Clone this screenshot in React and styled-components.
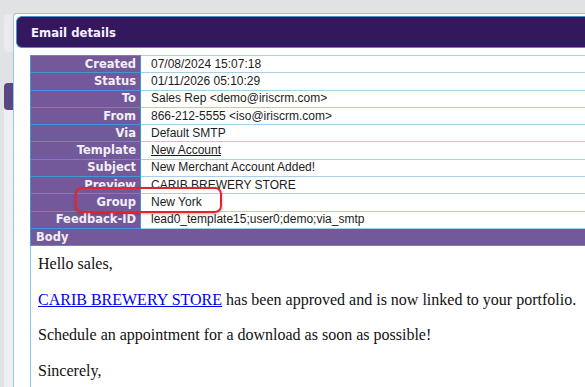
import styled, { createGlobalStyle } from "styled-components";

const GlobalStyle = createGlobalStyle`
  html, body {
    margin: 0;
    padding: 0;
    background: #e1e2e4;
    overflow: hidden;
  }
`;

const Page = styled.div`
  position: relative;
  width: 585px;
  height: 387px;
  display: flex;
  overflow: hidden;
`;

const BackWindow = styled.div`
  width: 9px;
  margin-left: 4px;
  display: flex;
  flex-direction: column;
`;

const BackPanel = styled.div`
  height: ${(p) => p.h}px;
  margin-top: ${(p) => p.top || 0}px;
  background: ${(p) => p.bg};
  border-radius: ${(p) => (p.round ? "4px 0 0 4px" : "0")};
  flex: ${(p) => (p.fill ? 1 : "none")};
`;

const Modal = styled.div`
  flex: 1;
  margin-top: 13px;
  background: #ffffff;
  border: 1px solid #8ccbee;
  border-right: none;
  border-bottom: none;
  border-top-left-radius: 3px;
  padding: 2px 0 0 2px;
  display: flex;
  flex-direction: column;
`;

const Header = styled.div`
  flex: none;
  height: 30px;
  background: #33185e;
  border: 1px solid #4d8fcf;
  border-right: none;
  border-radius: 6px 0 0 6px;
  display: flex;
  align-items: center;
  padding-left: 14px;
  color: #f4f0ff;
  font-family: "DejaVu Sans Condensed", "DejaVu Sans", sans-serif;
  font-weight: bold;
  font-size: 13px;
`;

const Content = styled.div`
  flex: none;
  padding: 7px 0 0 14px;
`;

const Table = styled.table`
  width: 100%;
  border-collapse: collapse;
  font-family: "Liberation Sans", Arial, sans-serif;
  font-size: 12px;
`;

const Row = styled.tr`
  height: 17.3px;
`;

const Label = styled.td`
  width: 105px;
  padding: 0 4px 0 0;
  background: #74599a;
  color: #f2eff7;
  font-family: "DejaVu Sans", sans-serif;
  font-size: 11.5px;
  font-weight: bold;
  text-align: right;
  border: 1px solid #3f97dc;
  line-height: 15px;
  white-space: nowrap;
`;

const Value = styled.td`
  padding: 0 0 0 10px;
  color: #1c1c1c;
  border-top: 1px solid #a8cfe8;
  border-bottom: 1px solid #a8cfe8;
  line-height: 15px;
  white-space: nowrap;
`;

const Underlined = styled.span`
  text-decoration: underline;
`;

const Section = styled.td`
  background: #74599a;
  color: #f2eff7;
  font-family: "DejaVu Sans", sans-serif;
  font-size: 11.5px;
  font-weight: bold;
  padding: 0 0 0 5px;
  border: 1px solid #3f97dc;
  border-right: none;
  line-height: 15px;
`;

const Body = styled.td`
  border-left: 1px solid #8ccbee;
  padding: 8px 0 0 7px;
  font-family: "Liberation Serif", serif;
  font-size: 16px;
  color: #111;
  vertical-align: top;
`;

const Para = styled.p`
  margin: 0 0 16px 0;
  line-height: 19.5px;
  white-space: nowrap;
`;

const Link = styled.a`
  color: #0000ee;
  text-decoration: underline;
`;

const Highlight = styled.div`
  position: absolute;
  left: 75px;
  top: 187px;
  width: 143px;
  height: 22px;
  border: 2px solid #e0262b;
  border-radius: 7px;
  box-shadow: 0 1px 3px rgba(120, 0, 0, 0.35);
  pointer-events: none;
`;

const details = [
  ["Created", "07/08/2024 15:07:18"],
  ["Status", "01/11/2026 05:10:29"],
  ["To", "Sales Rep <demo@iriscrm.com>"],
  ["From", "866-212-5555 <iso@iriscrm.com>"],
  ["Via", "Default SMTP"],
  ["Template", "New Account", true],
  ["Subject", "New Merchant Account Added!"],
  ["Preview", "CARIB BREWERY STORE"],
  ["Group", "New York"],
  ["Feedback-ID", "lead0_template15;user0;demo;via_smtp"],
];

export default function App() {
  return (
    <>
      <GlobalStyle />
      <Page>
        <BackWindow>
          <BackPanel top={14} h={38} bg="#ebebed" round />
          <BackPanel top={31} h={27} bg="#5a4680" round />
          <BackPanel fill bg="#eef0f2" />
        </BackWindow>
        <Modal>
          <Header>Email details</Header>
          <Content>
            <Table>
              <tbody>
                {details.map(([label, value, link]) => (
                  <Row key={label}>
                    <Label>{label}</Label>
                    <Value>{link ? <Underlined>{value}</Underlined> : value}</Value>
                  </Row>
                ))}
                <Row>
                  <Section colSpan={2}>Body</Section>
                </Row>
                <tr>
                  <Body colSpan={2}>
                    <Para>Hello sales,</Para>
                    <Para>
                      <Link href="#">CARIB BREWERY STORE</Link> has been approved and is now linked to your portfolio.
                    </Para>
                    <Para>Schedule an appointment for a download as soon as possible!</Para>
                    <Para>Sincerely,</Para>
                  </Body>
                </tr>
              </tbody>
            </Table>
          </Content>
        </Modal>
        <Highlight />
      </Page>
    </>
  );
}
